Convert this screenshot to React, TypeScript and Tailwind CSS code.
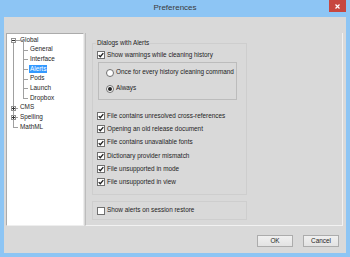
import React from 'react';

const Check = ({ checked }: { checked: boolean }) => (
  <span className="w-[8px] h-[8px] border border-[#707070] bg-white flex items-center justify-center shrink-0">
    {checked && (
      <svg width="6" height="6" viewBox="0 0 6 6">
        <path d="M0.7 3.1 L2.3 4.7 L5.3 1.1" stroke="#1f1f1f" strokeWidth="1.3" fill="none" />
      </svg>
    )}
  </span>
);

const Radio = ({ checked }: { checked: boolean }) => (
  <span className="w-[8px] h-[8px] rounded-full border border-[#707070] bg-white flex items-center justify-center shrink-0">
    {checked && <span className="w-[4px] h-[4px] rounded-full bg-[#222]" />}
  </span>
);

const CheckRow = ({ label, checked = true }: { label: string; checked?: boolean }) => (
  <div className="flex items-center gap-[1px] h-[13.2px]">
    <Check checked={checked} />
    <span className="ml-[1px]">{label}</span>
  </div>
);

const RadioRow = ({ label, checked }: { label: string; checked: boolean }) => (
  <div className="flex items-center gap-[2px] h-[16px]">
    <Radio checked={checked} />
    <span>{label}</span>
  </div>
);

const treeItems = [
  { name: 'Global', level: 0 },
  { name: 'General', level: 1 },
  { name: 'Interface', level: 1 },
  { name: 'Alerts', level: 1, selected: true },
  { name: 'Pods', level: 1 },
  { name: 'Launch', level: 1 },
  { name: 'Dropbox', level: 1 },
  { name: 'CMS', level: 0 },
  { name: 'Spelling', level: 0 },
  { name: 'MathML', level: 0 },
];

const alerts = [
  'File contains unresolved cross-references',
  'Opening an old release document',
  'File contains unavailable fonts',
  'Dictionary provider mismatch',
  'File unsupported in mode',
  'File unsupported in view',
];

// row centre inside the tree box
const rowY = (i: number) => Math.round(5.8 + i * 9.7) + 0.5;

const TreeLines = () => (
  <svg className="absolute inset-0 pointer-events-none" width="78" height="193" shapeRendering="crispEdges">
    {/* root line */}
    <line x1="6.5" y1={rowY(0) + 2} x2="6.5" y2={rowY(9)} stroke="#a0a0a0" />
    <line x1="6.5" y1={rowY(9)} x2="11" y2={rowY(9)} stroke="#a0a0a0" />
    {/* children of Global */}
    <line x1="16.5" y1={rowY(0)} x2="16.5" y2={rowY(6)} stroke="#a0a0a0" />
    <line x1="9" y1={rowY(0)} x2="16.5" y2={rowY(0)} stroke="#a0a0a0" />
    {[1, 2, 3, 4, 5, 6].map((i) => (
      <line key={i} x1="16.5" y1={rowY(i)} x2="21" y2={rowY(i)} stroke="#a0a0a0" />
    ))}
    {/* expand boxes */}
    {[0, 7, 8].map((i) => (
      <g key={i}>
        <rect x="4.5" y={rowY(i) - 2} width="4" height="4" fill="white" stroke="#919191" />
        <line x1="5" y1={rowY(i)} x2="8" y2={rowY(i)} stroke="#333" />
        {i !== 0 && <line x1="6.5" y1={rowY(i) - 1.5} x2="6.5" y2={rowY(i) + 1.5} stroke="#333" />}
        {i !== 0 && <line x1="9" y1={rowY(i)} x2="11" y2={rowY(i)} stroke="#a0a0a0" />}
      </g>
    ))}
  </svg>
);

export default function App() {
  return (
    <div className="w-[350px] h-[257px] bg-[#8dc5f4] flex flex-col font-['Liberation_Sans',Arial,sans-serif] text-[6.4px] text-[#1e1e1e] leading-none overflow-hidden">
      {/* title bar */}
      <div className="h-[17px] relative flex items-center justify-center shrink-0">
        <span className="text-[8px] text-[#3a3a3a] -mt-[1px]">Preferences</span>
        <div className="absolute top-0 right-[4px] w-[17px] h-[12px] bg-[#c7473f] flex items-center justify-center">
          <svg width="5" height="5" viewBox="0 0 5 5">
            <path d="M0.5 0.5 L4.5 4.5 M4.5 0.5 L0.5 4.5" stroke="white" strokeWidth="1.2" />
          </svg>
        </div>
      </div>

      {/* client */}
      <div className="flex-1 mx-[4px] mb-[4px] bg-[#d9d9d9] flex flex-col">
        <div className="flex pt-[16px] pl-[2px]">
          {/* tree */}
          <div className="relative w-[78px] h-[193px] bg-white border border-[#ababab] border-b-[#eeeeee] border-r-[#eeeeee]">
            <TreeLines />
            <div className="flex flex-col pt-[1px]">
              {treeItems.map((item) => (
                <div
                  key={item.name}
                  className={`h-[9.7px] flex items-center ${item.level === 0 ? 'pl-[12px]' : 'pl-[22px]'}`}
                >
                  <span
                    className={`px-[1px] py-[1px] ${item.selected ? 'bg-[#3399ff] text-white' : ''}`}
                  >
                    {item.name}
                  </span>
                </div>
              ))}
            </div>
          </div>

          {/* page */}
          <div className="ml-[1px] w-[258px] h-[193px] border-l border-r border-b border-l-[#bdbdbd] border-r-[#f2f2f2] border-b-[#f2f2f2] pl-[6px] pt-[7px]">
            <fieldset className="w-[155px] h-[155px] border border-[#cecece] pl-[4px] pr-[9px] m-0">
              <legend className="px-[1px] -ml-[1px] text-[6.4px]">Dialogs with Alerts</legend>
              <div className="mt-[2px]">
                <CheckRow label="Show warnings while cleaning history" />
              </div>
              <div className="ml-[1px] h-[38px] border border-[#bcbcbc] pl-[7px] pt-[2px]">
                <RadioRow label="Once for every history cleaning command" checked={false} />
                <RadioRow label="Always" checked />
              </div>
              <div className="mt-[10px] flex flex-col">
                {alerts.map((a) => (
                  <CheckRow key={a} label={a} />
                ))}
              </div>
            </fieldset>
            <div className="mt-[6px] w-[155px] h-[19px] border border-[#cecece] pl-[4px] flex items-center">
              <CheckRow label="Show alerts on session restore" checked={false} />
            </div>
          </div>
        </div>

        {/* buttons */}
        <div className="flex-1 flex items-end justify-end gap-[10px] pr-[7px] pb-[6px]">
          <button className="w-[36px] h-[12px] border border-[#acacac] bg-gradient-to-b from-[#f0f0f0] to-[#e3e3e3] text-[6.4px] text-[#1e1e1e]">
            OK
          </button>
          <button className="w-[36px] h-[12px] border border-[#acacac] bg-gradient-to-b from-[#f0f0f0] to-[#e3e3e3] text-[6.4px] text-[#1e1e1e]">
            Cancel
          </button>
        </div>
      </div>
    </div>
  );
}
